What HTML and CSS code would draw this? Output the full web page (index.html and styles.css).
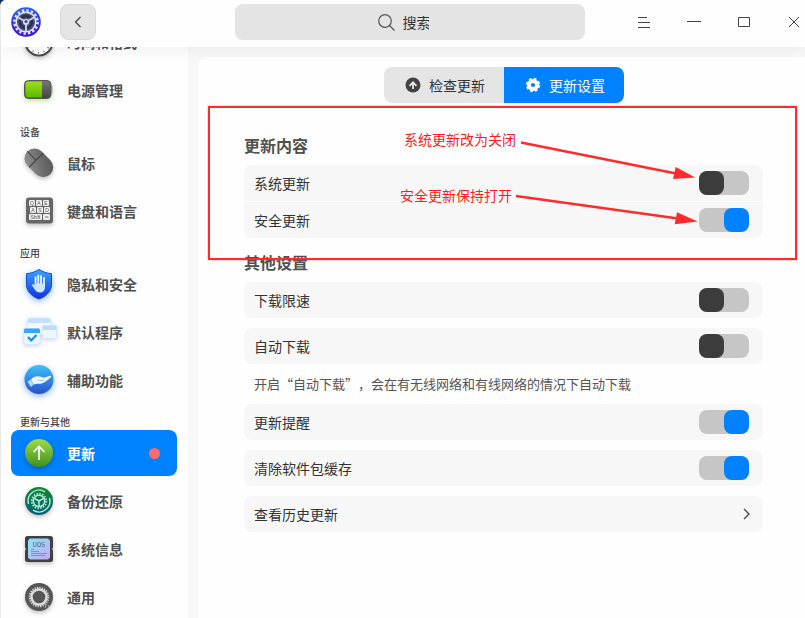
FILE: index.html
```html
<!DOCTYPE html>
<html lang="zh-CN">
<head>
<meta charset="utf-8">
<title>控制中心</title>
<link rel="stylesheet" href="styles.css">
</head>
<body>
<div class="window">
  <header class="titlebar">
    <div class="brand">
      <svg class="logo" viewBox="0 0 30 30" aria-hidden="true">
        <defs><linearGradient id="lg" x1="0" y1="0" x2="0" y2="1"><stop offset="0" stop-color="#2b62f5"/><stop offset="1" stop-color="#3d10dc"/></linearGradient></defs>
        <circle cx="15" cy="15" r="14.800" fill="url(#lg)"/>
        <circle cx="15" cy="15" r="11.500" fill="none" stroke="#dfe3f5" stroke-width="2.600" stroke-dasharray="2.400 2.116"/>
        <circle cx="15" cy="15" r="9.800" fill="#4a5070" stroke="#dfe3f5" stroke-width="1.500"/>
        <circle cx="15" cy="15" r="6" fill="none" stroke="#2a2f52" stroke-width="2.400"/>
        <path d="M15 15v9M15 15l-8-4.600M15 15l8-4.600" stroke="#c3c9e2" stroke-width="2"/>
        <circle cx="15" cy="15" r="3" fill="#dfe3f5"/><circle cx="15" cy="14.500" r="1.600" fill="#2f45c9"/>
      </svg>
      <button class="back" aria-label="返回"><svg width="8" height="12" viewBox="0 0 8 12"><path d="M6.500 1L1.500 6l5 5" fill="none" stroke="#444" stroke-width="1.300"/></svg></button>
    </div>
    <label class="search">
      <svg width="17" height="17" viewBox="0 0 17 17" aria-hidden="true"><circle cx="7" cy="7" r="6.300" fill="none" stroke="#555" stroke-width="1.200"/><path d="M11.500 11.500L16.500 16.500" stroke="#555" stroke-width="1.300"/></svg>
      <input type="search" placeholder="搜索" aria-label="搜索">
    </label>
    <div class="controls">
      <button aria-label="菜单"><svg width="14" height="14" viewBox="0 0 14 14"><path d="M1 2.500h9M1 7.500h12M1 12.500h12"/></svg></button>
      <button aria-label="最小化"><svg width="14" height="14" viewBox="0 0 14 14"><path d="M0 6.500h14"/></svg></button>
      <button aria-label="最大化"><svg width="14" height="14" viewBox="0 0 14 14"><path d="M1.500 2.500h11v9h-11z"/></svg></button>
      <button aria-label="关闭"><svg width="14" height="14" viewBox="0 0 14 14"><path d="M2 2l10 10M12 2L2 12"/></svg></button>
    </div>
  </header>

  <div class="body">
    <nav class="sidebar">
      <div class="list">
        <a class="item" href="#"><svg class="icon shade" viewBox="0 0 32 32"><circle cx="16" cy="16" r="13.500" fill="#fff" stroke="#4a4a4a" stroke-width="2"/><circle cx="16" cy="16" r="10.800" fill="none" stroke="#555" stroke-width="1.600" stroke-dasharray=".9 4.755"/><path d="M16 8v8l5 3" fill="none" stroke="#555"/></svg>时间和格式</a>
        <a class="item" href="#"><svg class="icon glow-green" viewBox="0 0 32 32">
          <defs><linearGradient id="bg" x1="0" y1="0" x2="0" y2="1"><stop offset="0" stop-color="#9be01c"/><stop offset="1" stop-color="#5cb800"/></linearGradient><linearGradient id="bd" x1="0" y1="0" x2="0" y2="1"><stop offset="0" stop-color="#777"/><stop offset="1" stop-color="#444"/></linearGradient></defs>
          <rect x="28" y="12" width="2" height="7" rx="1" fill="#c9c9c9"/><rect x="1.500" y="6.500" width="26.500" height="18" rx="4" fill="url(#bd)" stroke="#555"/><path d="M19 7.500v16H5.500a3 3 0 0 1-3-3v-10a3 3 0 0 1 3-3z" fill="url(#bg)"/></svg>电源管理</a>
        <h2 class="label">设备</h2>
        <a class="item" href="#"><svg class="icon shade" viewBox="0 0 32 32">
          <defs><linearGradient id="ms" x1="0" y1="0" x2="1" y2="1"><stop offset="0" stop-color="#999"/><stop offset=".6" stop-color="#6a6a6a"/><stop offset="1" stop-color="#555"/></linearGradient></defs>
          <g transform="rotate(-45 16 16)"><rect x="6" y="-.5" width="20" height="32.500" rx="10" fill="url(#ms)"/><path d="M6 12h20M16-.5V12" stroke="#444" stroke-width="1.100"/></g></svg>鼠标</a>
        <a class="item" href="#"><svg class="icon shade" viewBox="0 0 32 32"><rect x="3" y="2.500" width="27" height="26" rx="3" fill="#666"/><g fill="#eee"><rect x="6" y="5" width="6" height="6" rx="1"/><rect x="13" y="5" width="6" height="6" rx="1"/><rect x="20" y="5" width="6" height="6" rx="1"/><rect x="7" y="12" width="6" height="6" rx="1"/><rect x="14" y="12" width="6" height="6" rx="1"/><rect x="21" y="12" width="6" height="6" rx="1"/><rect x="6" y="19" width="13" height="6" rx="1"/><rect x="20" y="19" width="7" height="6" rx="1"/></g><g class="keys"><text x="9" y="10">Q</text><text x="16" y="10">A</text><text x="23" y="10">E</text><text x="10" y="17">A</text><text x="17" y="17">S</text><text x="24" y="17">D</text><text x="12.500" y="24">Shift</text></g><path d="M22 22h3.500" stroke="#555" stroke-width=".8"/></svg>键盘和语言</a>
        <h2 class="label">应用</h2>
        <a class="item" href="#"><svg class="icon glow-blue" viewBox="0 0 32 32">
          <defs><linearGradient id="sh" x1="0" y1="0" x2="0" y2="1"><stop offset="0" stop-color="#35a8ff"/><stop offset="1" stop-color="#1230e0"/></linearGradient></defs>
          <path d="M16 1.500c4 2.600 8 3.800 12.500 4.200v10.800C28.500 24 22 29 16 31 10 29 3.500 24 3.500 16.500V5.700C8 5.300 12 4.100 16 1.500z" fill="url(#sh)" stroke="#1748d8"/>
          <path d="M12.600 18V9.200M15.300 17V7.500M18.100 17V8M21 18v-8" stroke="#e3f2ff" stroke-width="1.900" stroke-linecap="round"/><path d="M11.700 15.500h10.200v4c0 3.500-2 5-5 5-4 0-5-3-8.200-7.500.6-1.500 1.800-.8 3 .6z" fill="#cde6ff"/></svg>隐私和安全</a>
        <a class="item" href="#"><svg class="icon wide glow-pale" viewBox="0 0 36 32">
          <rect x="4.500" y="2" width="23" height="16" rx="2" fill="#f3f8ff"/><path d="M4.500 7V4a2 2 0 0 1 2-2h19a2 2 0 0 1 2 2v3z" fill="#c6e0ff"/>
          <rect x="19.500" y="9.500" width="14" height="13" rx="1.500" fill="#edf5ff" stroke="#d3e6fb" stroke-width=".6"/><path d="M19.500 14v-3a1.500 1.500 0 0 1 1.500-1.500h11a1.500 1.500 0 0 1 1.500 1.500v3z" fill="#bcdcff"/>
          <rect x="1" y="12.500" width="16" height="16" rx="1.500" fill="#edf5ff" stroke="#d3e6fb" stroke-width=".6"/><path d="M1 17v-3a1.500 1.500 0 0 1 1.500-1.500h13A1.500 1.500 0 0 1 17 14v3z" fill="#36a5ff"/><path d="M5 21l3.200 3.500 5.300-5.500" fill="none" stroke="#168cff" stroke-width="2.200"/></svg>默认程序</a>
        <a class="item" href="#"><svg class="icon glow-blue" viewBox="0 0 32 32">
          <defs><linearGradient id="ac" x1="0" y1="0" x2="0" y2="1"><stop offset="0" stop-color="#3cc2fb"/><stop offset="1" stop-color="#2a50cc"/></linearGradient></defs>
          <circle cx="16" cy="15.500" r="14.500" fill="url(#ac)"/><path d="M4.500 18l3-2.500 3 5-2.500 2.500z" fill="#b8dcff"/><path d="M8 15.500c2.500-2.800 5-3.700 8.500-3 2 .4 3.500 1 5 1l5.500-1.700c1.500-.2 1.500.9.500 1.700-3 2.800-6.500 5.700-10 6.200-3 .3-5-.4-6.800.8z" fill="#eff7ff"/><path d="M14.500 16c2 .6 4.500.8 7 0" fill="none" stroke="#82b9ec" stroke-width=".8"/></svg>辅助功能</a>
        <h2 class="label">更新与其他</h2>
        <a class="item active" href="#" aria-current="page"><svg class="icon shade" viewBox="0 0 32 32">
          <defs><linearGradient id="up" x1="0" y1="0" x2="0" y2="1"><stop offset="0" stop-color="#a0dc48"/><stop offset="1" stop-color="#3f8f22"/></linearGradient></defs>
          <circle cx="16" cy="16" r="14" fill="url(#up)"/><path d="M16 23V10M10.500 15L16 9.500l5.500 5.500" fill="none" stroke="#fff" stroke-width="1.700"/></svg>更新<span class="dot"></span></a>
        <a class="item" href="#"><svg class="icon shade" viewBox="0 0 32 32">
          <defs><linearGradient id="bk" x1="0" y1="0" x2="0" y2="1"><stop offset="0" stop-color="#0a8a2c"/><stop offset="1" stop-color="#075f7d"/></linearGradient></defs>
          <circle cx="16" cy="16" r="14" fill="url(#bk)"/><path d="M5.500 19A11 11 0 0 1 22 6.800M26.500 13A11 11 0 0 1 10 25.200" fill="none" stroke="#b8eadb" stroke-width="1.400"/><circle cx="16" cy="16" r="7.300" fill="none" stroke="#b8eadb" stroke-width="1.800" stroke-dasharray="1.500 1.366"/><circle cx="16" cy="16" r="5.700" fill="none" stroke="#b8eadb" stroke-width="1.500"/><path d="M16 16v5.500M16 16l-5-2.800M16 16l5-2.800" stroke="#b8eadb" stroke-width="1.500"/></svg>备份还原</a>
        <a class="item" href="#"><svg class="icon shade" viewBox="0 0 32 32">
          <defs><linearGradient id="si" x1="0" y1="0" x2="1" y2="1"><stop offset="0" stop-color="#8be6fa"/><stop offset="1" stop-color="#c5a8f4"/></linearGradient></defs>
          <path d="M4.500 3h23a2.500 2.500 0 0 1 2.500 2.500v9l-1 1.500 1 1.500v9a2.500 2.500 0 0 1-2.500 2.500h-23A2.500 2.500 0 0 1 2 26.500v-9L3 16l-1-1.500v-9A2.500 2.500 0 0 1 4.500 3z" fill="#414141"/><path d="M7 5.500h18l2 2v17l-2 2H7l-2-2v-17z" fill="url(#si)"/><text class="chip" x="16" y="13.500">UOS</text><path d="M8 16.500h3M8 18.500h8M8 20.500h16M8 22.500h14" stroke="#7187ac" stroke-width=".8"/></svg>系统信息</a>
        <a class="item" href="#"><svg class="icon shade" viewBox="0 0 32 32"><circle cx="16" cy="16" r="14" fill="#555"/><circle cx="16" cy="16" r="9.300" fill="none" stroke="#ddd" stroke-width="2" stroke-dasharray="1.300 1.134"/><circle cx="16" cy="16" r="7.500" fill="none" stroke="#ddd" stroke-width="2.400"/><path d="M22 27l1.500-4M25 26l1-2" stroke="#aaa"/></svg>通用</a>
      </div>
    </nav>

    <main class="content">
      <div class="tabs" role="tablist">
        <button class="tab" role="tab" aria-selected="false"><svg width="16" height="16" viewBox="0 0 16 16"><circle cx="8" cy="8" r="7.500" fill="#424242"/><path d="M8 12V6.500M4.500 8.800L8 5.300l3.500 3.500" fill="none" stroke="#e5e5e5" stroke-width="1.800"/></svg>检查更新</button>
        <button class="tab selected" role="tab" aria-selected="true"><svg width="16" height="16" viewBox="0 0 16 16"><circle cx="8" cy="8" r="4.100" fill="none" stroke="#fff" stroke-width="4"/><circle cx="8" cy="8" r="6.300" fill="none" stroke="#fff" stroke-width="1.800" stroke-dasharray="2.700 2.248"/></svg>更新设置</button>
      </div>

      <h1 class="title">更新内容</h1>
      <div class="group">
        <label class="row">系统更新<input class="switch" type="checkbox" role="switch"></label>
        <label class="row">安全更新<input class="switch" type="checkbox" role="switch" checked></label>
      </div>

      <h1 class="title">其他设置</h1>
      <div class="stack">
        <label class="row">下载限速<input class="switch" type="checkbox" role="switch"></label>
        <label class="row">自动下载<input class="switch" type="checkbox" role="switch"></label>
        <p class="hint">开启“自动下载”，会在有无线网络和有线网络的情况下自动下载</p>
        <label class="row">更新提醒<input class="switch" type="checkbox" role="switch" checked></label>
        <label class="row">清除软件包缓存<input class="switch" type="checkbox" role="switch" checked></label>
        <button class="row">查看历史更新<svg class="chevron" width="8" height="12" viewBox="0 0 8 12"><path d="M1 1l5 5-5 5" fill="none" stroke="#444" stroke-width="1.300"/></svg></button>
      </div>

      <div class="callout">
        <span class="note note-off">系统更新改为关闭</span>
        <span class="note note-on">安全更新保持打开</span>
        <svg class="arrows" width="190" height="90" viewBox="510 140 190 90" aria-hidden="true">
          <path d="M521 142.500L676 173.500M516 196L678 218.500" stroke="#fc2c2c" stroke-width="2.300"/>
          <path d="M675.700 167L695.300 177.500 673 179zM677 212.300L697.700 221.500 674.700 224.300z" fill="#fc2c2c"/>
        </svg>
      </div>
    </main>
  </div>
</div>
</body>
</html>
```
FILE: styles.css
```css
* { box-sizing: border-box; }

body {
  margin: 0;
  background: #10365c;
  color: #444;
  font: 14px/20px "Noto Sans CJK SC", sans-serif;
}

button, input {
  margin: 0;
  padding: 0;
  border: 0;
  background: none;
  color: inherit;
  font: inherit;
}

svg { display: block; flex: none; }

.window {
  display: flex;
  flex-direction: column;
  height: 100vh;
  overflow: hidden;
  border-left: 1px solid #e4e8e8;
  border-top-left-radius: 6px;
  background: #f8f8f8;
}

/* Title bar */
.titlebar {
  position: relative;
  z-index: 2;
  display: grid;
  grid-template-columns: 234px 1fr 220px;
  align-items: center;
  flex: none;
  height: 47px;
  padding-bottom: 3px;
  background: #fefefe;
  box-shadow: 0 0 20px rgba(0, 0, 0, 0.08);
}

.brand {
  display: flex;
  align-items: center;
  gap: 19px;
  padding-left: 10px;
}

.logo { width: 30px; height: 30px; }

.back {
  display: grid;
  place-items: center;
  width: 36px;
  height: 36px;
  border: 1px solid #dadada;
  border-radius: 8px;
  background: #e5e5e5;
}

.search {
  display: flex;
  align-items: center;
  justify-content: center;
  gap: 8px;
  height: 36px;
  border-radius: 8px;
  background: #e4e4e4;
}

.search input { width: 40px; outline: 0; appearance: none; }
.search input::placeholder { color: #333; opacity: 1; }

.controls {
  display: flex;
  justify-content: flex-end;
  gap: 36px;
  padding-right: 4px;
}

.controls path { fill: none; stroke: #444; stroke-width: 1; }

.body { display: flex; flex: 1; min-height: 0; }

/* Sidebar */
.sidebar {
  flex: none;
  width: 187px;
  overflow: hidden;
  background: #fefefe;
}

.list {
  display: flex;
  flex-direction: column;
  gap: 2px;
  margin-top: -28px;
  padding: 0 11px 0 10px;
}

.item {
  display: flex;
  align-items: center;
  gap: 12px;
  flex: none;
  height: 46px;
  padding: 0 17px 0 12px;
  border-radius: 8px;
  color: #505050;
  font-weight: 700;
  text-decoration: none;
}

.item.active { background: #0081ff; color: #fff; }

.label {
  margin: -2px 0;
  padding: 11px 0 0 9px;
  font-size: 10px;
  font-weight: 500;
  line-height: 16px;
}

.icon { width: 32px; height: 32px; overflow: visible; }
.icon.wide { width: 36px; margin-right: -4px; }
.shade { filter: drop-shadow(0 2px 2px rgba(0, 0, 0, 0.25)); }
.glow-green { filter: drop-shadow(0 2px 2px rgba(110, 190, 20, 0.4)); }
.glow-blue { filter: drop-shadow(0 2px 3px rgba(20, 120, 240, 0.5)); }
.glow-pale { filter: drop-shadow(0 1px 2px rgba(90, 150, 220, 0.4)); }
.keys { fill: #555; font: 5px "Liberation Sans", sans-serif; text-anchor: middle; }
.chip { fill: #4c6784; font: 7px "DejaVu Sans Mono", monospace; text-anchor: middle; }

.dot {
  width: 11px;
  height: 11px;
  margin-left: auto;
  border-radius: 50%;
  background: #ff6b6b;
}

/* Content */
.content {
  position: relative;
  flex: 1;
  margin: 10px 0 0 10px;
  padding: 10px 42px 0 46px;
  border-top-left-radius: 8px;
  background: #fefefe;
}

.tabs {
  display: flex;
  width: 240px;
  margin: 0 auto 30px;
  overflow: hidden;
  border-radius: 8px;
}

.tab {
  display: flex;
  align-items: center;
  justify-content: center;
  flex: 1;
  gap: 8px;
  height: 36px;
  padding-left: 3px;
  background: #e5e5e5;
  color: #333;
}

.tab.selected { background: #0081ff; color: #fff; }

.title {
  margin: 0 0 8px;
  color: #505050;
  font-size: 16px;
  font-weight: 700;
  line-height: 24px;
}

.group {
  display: grid;
  gap: 1px;
  margin-bottom: 12px;
  overflow: hidden;
  border-radius: 8px;
}

.stack { display: grid; gap: 10px; }

.row {
  display: flex;
  align-items: center;
  justify-content: space-between;
  height: 36px;
  padding: 0 14px 0 10px;
  background: #f7f7f7;
  color: #333;
}

.stack .row { border-radius: 8px; }

.hint {
  margin: 0 10px;
  color: #555;
  font-size: 13px;
  text-spacing-trim: space-all;
}

.chevron { margin-right: -2px; }

.switch {
  appearance: none;
  width: 50px;
  height: 24px;
  margin: 0;
  border-radius: 8px;
  background: #c6c6c6;
}

.switch::before {
  content: "";
  display: block;
  width: 25px;
  height: 24px;
  border-radius: 8px;
  background: #3c3c3c;
}

.switch:checked::before { margin-left: auto; background: #0081ff; }

/* Callout drawn over the first settings group */
.callout {
  position: absolute;
  top: 49px;
  right: 8px;
  left: 10px;
  height: 154px;
  border: 2px solid #fc2c2c;
  box-shadow: 0 0 1px #fc2c2c;
  pointer-events: none;
}

.note { position: absolute; color: #ff1c1c; }
.note-off { top: 21px; right: 279px; }
.note-on { top: 77px; right: 283px; }
.arrows { position: absolute; top: 32px; right: 95px; }
```
